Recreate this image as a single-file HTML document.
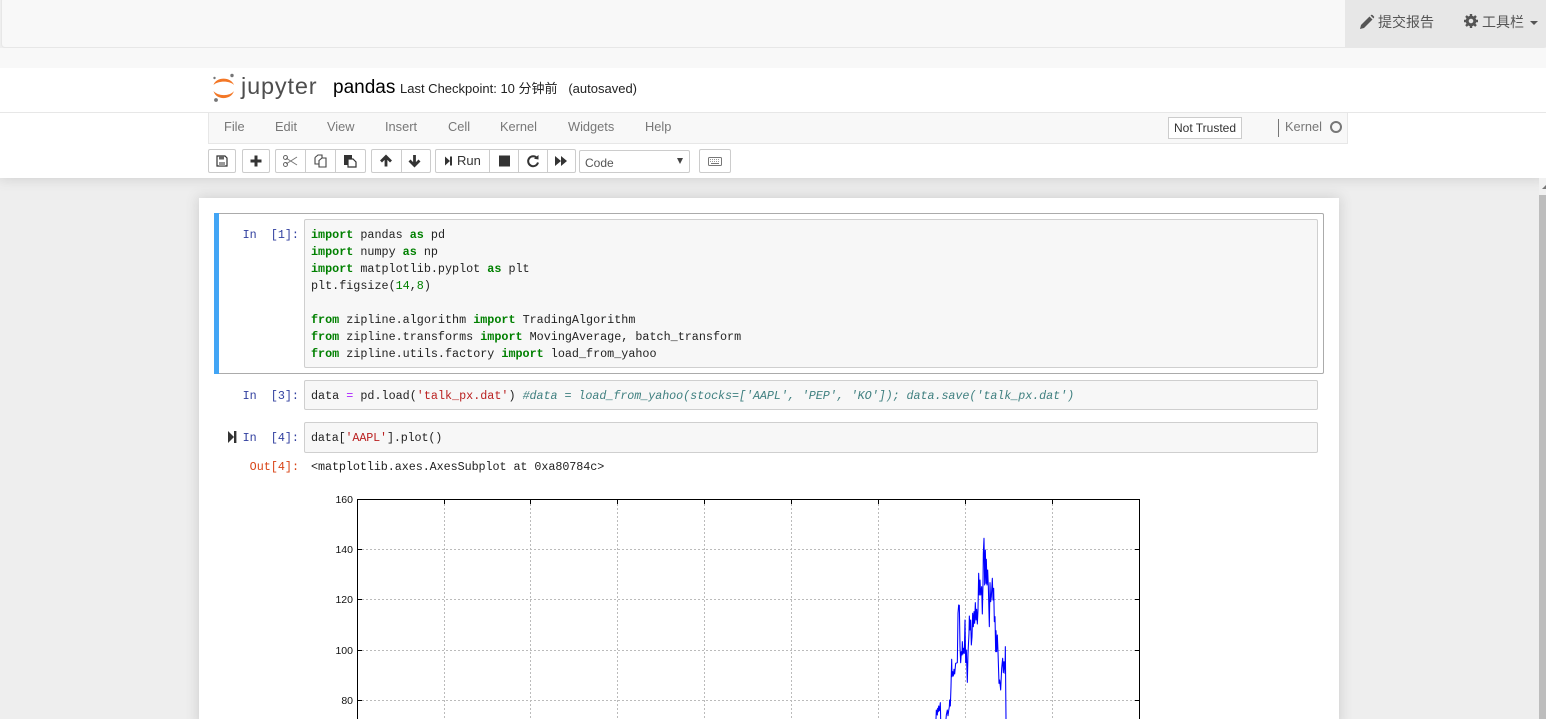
<!DOCTYPE html>
<html><head><meta charset="utf-8"><title>pandas</title>
<style>
html,body{margin:0;padding:0;width:1546px;height:719px;overflow:hidden;background:#eee;font-family:"Liberation Sans","Noto Sans CJK SC",sans-serif;}
#w{position:relative;width:1546px;height:719px;overflow:hidden;background:#eee;}
.a{position:absolute;box-sizing:border-box;}
.t{position:absolute;white-space:pre;line-height:18px;}
.m{color:#777;font-size:12.8px;top:118px;}
.b{position:absolute;box-sizing:border-box;top:149px;height:24px;background:#fff;border:1px solid #ccc;}
.b svg{position:absolute;left:0;top:0;}
.code{position:absolute;left:311px;margin:0;font:11.75px/17px "Liberation Mono",monospace;color:#222;white-space:pre;}
.p{position:absolute;left:204px;width:95px;text-align:right;font:11.75px/17px "Liberation Mono",monospace;color:#303F9F;white-space:pre;}
.input{position:absolute;box-sizing:border-box;left:304px;width:1014px;background:#f7f7f7;border:1px solid #cfcfcf;border-radius:2px;}
b{color:#008000;}
.s{color:#BA2121;}.n{color:#008000;}.o{color:#AA22FF;}.c{color:#408080;font-style:italic;letter-spacing:-.07px;}
.y{position:absolute;font:10.5px/12px "Liberation Sans",sans-serif;color:#111;left:323px;width:30px;text-align:right;}
</style></head><body><div id="w">
<!-- header -->
<div class="a" style="left:0;top:68px;width:1546px;height:110px;background:#fff;box-shadow:0 0 12px 1px rgba(87,87,87,.2);"></div>
<!-- top nav -->
<div class="a" style="left:0;top:48px;width:1546px;height:20px;background:#f8f8f8;"></div>
<div class="a" style="left:1px;top:-3px;width:1546px;height:51px;background:#f8f8f8;border:1px solid #e7e7e7;border-radius:4px;"></div>
<div class="a" style="left:1345px;top:0;width:201px;height:47px;background:#e7e7e7;"></div>
<svg class="a" style="left:1359px;top:14px" width="16" height="16" viewBox="0 0 16 16"><path d="M1 15 L2 11 L10.5 2.5 L13.5 5.5 L5 14 Z M11.5 1.5 L12.5 .8 Q13 .5 13.5 1 L15 2.5 Q15.5 3 15 3.6 L14.5 4.5 Z" fill="#555"/></svg>
<div class="t" style="left:1378px;top:13px;font-size:14px;color:#555;">提交报告</div>
<svg class="a" style="left:1464px;top:14px" width="14" height="14" viewBox="0 0 14 14"><circle cx="7" cy="7" r="3.8" fill="none" stroke="#555" stroke-width="3"/><g stroke="#555" stroke-width="2.4"><path d="M7 0V3M7 11V14M0 7H3M11 7H14M2 2L4 4M10 10L12 12M12 2L10 4M4 10L2 12"/></g></svg>
<div class="t" style="left:1482px;top:13px;font-size:14px;color:#555;">工具栏</div>
<div class="a" style="left:1530px;top:21px;width:0;height:0;border:4px solid transparent;border-top-color:#555;border-bottom:0;"></div>

<div class="a" style="left:0;top:112px;width:1546px;height:1px;background:#e7e7e7;"></div>
<svg class="a" style="left:205px;top:68px" width="40" height="40" viewBox="205 68 40 40">
<path d="M213.5 85 C216 76.5 231 76.5 234 85 C230 80.5 218 80.5 213.5 85Z" fill="#F37726"/>
<path d="M213.5 91 C216 100.5 231 100.5 234 91 C230 96.5 218 96.5 213.5 91Z" fill="#F37726"/>
<circle cx="214.5" cy="78" r="1.2" fill="#767677"/><circle cx="232" cy="75.5" r="1.7" fill="#767677"/><circle cx="216" cy="100" r="1.9" fill="#767677"/>
</svg>
<div class="t" style="left:241px;top:74px;font-size:23.5px;line-height:24px;color:#4e4e4e;letter-spacing:.85px;">jupyter</div>
<div class="t" style="left:333px;top:79px;font-size:19px;color:#000;">pandas</div>
<div class="t" style="left:400px;top:80px;font-size:13px;color:#222;">Last Checkpoint: 10 分钟前 &nbsp; (autosaved)</div>

<!-- menu -->
<div class="a" style="left:208px;top:113px;width:1140px;height:31px;background:#f8f8f8;border:1px solid #e7e7e7;border-top:0;"></div>
<div class="t m" style="left:224px">File</div><div class="t m" style="left:275px">Edit</div><div class="t m" style="left:327px">View</div><div class="t m" style="left:385px">Insert</div><div class="t m" style="left:448px">Cell</div><div class="t m" style="left:500px">Kernel</div><div class="t m" style="left:568px">Widgets</div><div class="t m" style="left:645px">Help</div>
<div class="a" style="left:1168px;top:117px;width:74px;height:22px;background:#fff;border:1px solid #ccc;"></div>
<div class="t" style="left:1174px;top:118.5px;font-size:12px;color:#333;">Not Trusted</div>
<div class="a" style="left:1278px;top:119px;width:1px;height:18px;background:#777;"></div>
<div class="t m" style="left:1285px;">Kernel</div>
<div class="a" style="left:1330px;top:121px;width:12px;height:12px;border:2px solid #777;border-radius:50%;"></div>

<!-- toolbar -->
<div class="b" style="left:208px;width:28px;border-radius:2px"><svg width="26" height="22" viewBox="0 0 26 22"><path d="M8 6H16L18 8V16H8Z" fill="none" stroke="#333" stroke-width="1.2"/><rect x="10" y="6" width="5" height="3.5" fill="#666"/><rect x="10" y="12" width="6" height="4" fill="#999"/></svg></div>
<div class="b" style="left:242px;width:28px;border-radius:2px"><svg width="26" height="22" viewBox="0 0 26 22"><path d="M13 5.5V16.5M7.5 11H18.5" stroke="#333" stroke-width="3"/></svg></div>
<div class="b" style="left:275px;width:31px;border-radius:2px 0 0 2px"><svg width="29" height="22" viewBox="0 0 29 22"><path d="M10 8L21 15M10 14L21 7" stroke="#777" stroke-width="1"/><circle cx="9.5" cy="7.5" r="2" fill="none" stroke="#666"/><circle cx="9.5" cy="14.5" r="2" fill="none" stroke="#666"/></svg></div>
<div class="b" style="left:305px;width:31px"><svg width="29" height="22" viewBox="0 0 29 22"><path d="M9 7.5L12 5H16V8M9 7.5V14H13M13 10.5L16 8H20V17H13Z" fill="#fff" stroke="#444" stroke-width="1.1"/></svg></div>
<div class="b" style="left:335px;width:31px;border-radius:0 2px 2px 0"><svg width="29" height="22" viewBox="0 0 29 22"><rect x="8" y="5" width="8" height="10" fill="#333"/><path d="M12 9H17L20 12V17H12Z" fill="#fff" stroke="#333" stroke-width="1.2"/></svg></div>
<div class="b" style="left:371px;width:31px;border-radius:2px 0 0 2px"><svg width="29" height="22" viewBox="0 0 29 22"><path d="M14 16.5V7M9 11.5L14 6.5L19 11.5" fill="none" stroke="#333" stroke-width="2.8"/></svg></div>
<div class="b" style="left:401px;width:30px;border-radius:0 2px 2px 0"><svg width="28" height="22" viewBox="0 0 28 22"><path d="M12.500 5V15M7.500 10.500L12.500 15.500L17.500 10.500" fill="none" stroke="#333" stroke-width="2.8"/></svg></div>
<div class="b" style="left:435px;width:55px;border-radius:2px 0 0 2px"><svg width="20" height="22" viewBox="0 0 20 22"><path d="M9 6.5L14 11L9 15.5Z M14 6.5H16V15.5H14Z" fill="#333"/></svg><div class="t" style="left:21px;top:2px;font-size:13px;color:#333;">Run</div></div>
<div class="b" style="left:489px;width:30px"><svg width="28" height="22" viewBox="0 0 28 22"><rect x="9" y="5.500" width="11" height="11" fill="#333"/></svg></div>
<div class="b" style="left:518px;width:30px"><svg width="28" height="22" viewBox="0 0 28 22"><path d="M18 8A5 5 0 1 0 19 12.500" fill="none" stroke="#333" stroke-width="2"/><path d="M15 8.800L19.500 9.500V5Z" fill="#333"/></svg></div>
<div class="b" style="left:547px;width:29px;border-radius:0 2px 2px 0"><svg width="27" height="22" viewBox="0 0 27 22"><path d="M7 6L13 11L7 16Z M13 6L19 11L13 16Z" fill="#333"/></svg></div>
<div class="b" style="left:579px;top:150px;width:111px;height:23px;border-radius:2px"><div class="t" style="left:5px;top:3px;font-size:12px;color:#555;">Code</div><div class="a" style="left:97px;top:7px;width:0;height:0;border:3.500px solid transparent;border-top:6px solid #444;border-bottom:0;"></div></div>
<div class="b" style="left:699px;width:32px;border-radius:2px"><svg width="30" height="22" viewBox="0 0 30 22"><rect x="8.500" y="7.500" width="13" height="8" rx="1" fill="none" stroke="#777"/><path d="M10 9.500H20M10 11.500H20" stroke="#999" stroke-dasharray="1 1"/><path d="M11 13.500H19" stroke="#777"/></svg></div>

<!-- scrollbar -->
<div class="a" style="left:1539px;top:178px;width:7px;height:541px;background:#f1f1f1;"></div>
<div class="a" style="left:1539px;top:195px;width:7px;height:524px;background:#bdbdbd;"></div>
<div class="a" style="left:1542px;top:185px;width:0;height:0;border-left:4px solid transparent;border-bottom:4px solid #777;"></div>

<!-- notebook -->
<div class="a" style="left:199px;top:198px;width:1140px;height:530px;background:#fff;box-shadow:0 0 12px 1px rgba(87,87,87,.2);"></div>
<div class="a" style="left:214px;top:213px;width:1110px;height:161px;border:1px solid #ababab;border-left:0;border-radius:2px;"></div>
<div class="a" style="left:214px;top:213px;width:5px;height:161px;background:#42A5F5;"></div>

<div class="input" style="top:219px;height:149px;"></div>
<div class="p" style="top:227px">In  [1]:</div>
<pre class="code" style="top:227px"><b>import</b> pandas <b>as</b> pd
<b>import</b> numpy <b>as</b> np
<b>import</b> matplotlib.pyplot <b>as</b> plt
plt.figsize(<span class="n">14</span>,<span class="n">8</span>)

<b>from</b> zipline.algorithm <b>import</b> TradingAlgorithm
<b>from</b> zipline.transforms <b>import</b> MovingAverage, batch_transform
<b>from</b> zipline.utils.factory <b>import</b> load_from_yahoo</pre>

<div class="input" style="top:380px;height:30px;"></div>
<div class="p" style="top:388px">In  [3]:</div>
<pre class="code" style="top:388px">data <span class="o">=</span> pd.load(<span class="s">'talk_px.dat'</span>) <span class="c">#data = load_from_yahoo(stocks=['AAPL', 'PEP', 'KO']); data.save('talk_px.dat')</span></pre>

<svg class="a" style="left:226px;top:430px" width="12" height="14" viewBox="0 0 12 14"><path d="M2 1L8 7L2 13Z" fill="#333"/><rect x="8" y="1" width="2.400" height="12" fill="#333"/></svg>
<div class="input" style="top:422px;height:31px;"></div>
<div class="p" style="top:430px">In  [4]:</div>
<pre class="code" style="top:430px;letter-spacing:-.15px">data[<span class="s">'AAPL'</span>].plot()</pre>
<div class="p" style="top:459px;color:#D84315">Out[4]:</div>
<pre class="code" style="top:459px;letter-spacing:-.07px">&lt;matplotlib.axes.AxesSubplot at 0xa80784c&gt;</pre>

<!-- plot -->
<svg class="a" style="left:340px;top:480px" width="820" height="239" viewBox="340 480 820 239">
<g stroke="#bbbbbb" stroke-width="1" stroke-dasharray="2 2" fill="none" shape-rendering="crispEdges">
<path d="M444.500 500V719M530.500 500V719M617.500 500V719M704.500 500V719M791.500 500V719M878.500 500V719M965.500 500V719M1052.500 500V719"/>
<path d="M358 549.500H1139M358 599.500H1139M358 650.500H1139M358 700.500H1139"/>
</g>
<g stroke="#000" stroke-width="1" shape-rendering="crispEdges">
<path d="M357.500 719V499.500H1139.500V719" fill="none"/>
<path d="M358 549.500H362M358 599.500H362M358 650.500H362M358 700.500H362M1139 549.500H1135M1139 599.500H1135M1139 650.500H1135M1139 700.500H1135"/>
<path d="M444.500 500V504M530.500 500V504M617.500 500V504M704.500 500V504M791.500 500V504M878.500 500V504M965.500 500V504M1052.500 500V504"/>
</g>
</svg>
<svg class="a" style="left:900px;top:520px" width="150" height="199" viewBox="0 0 450 597">
<path fill="none" stroke="#0000ff" stroke-width="3.200" stroke-linejoin="round" d="M108 597L109 570L112 585L113 565L115 575L116 558L118 572L121 548L122 597M138 597L139 585L142 570L144 587L146 572L148 560L149 540L151 558L153 500L155 418L156 470L158 455L160 468L162 448L164 462L167 430L172 428L174 280L176 255L178 256L180 380L182 428L184 395L186 405L187 365L189 402L191 385L193 400L195 300L197 428L199 390L202 487L204 400L207 340L208 288L210 330L212 300L214 375L216 350L218 280L220 320L222 275L224 310L226 248L228 300L230 268L232 312L234 270L236 160L238 225L240 180L242 225L245 200L247 282L249 190L250 100L252 55L254 195L256 90L258 190L259 118L261 195L263 150L265 200L268 320L270 188L272 245L274 230L277 175L279 240L281 205L283 305L285 290L287 395L288 332L290 395L292 345L294 395L297 490L299 480L302 510L305 445L308 415L310 458L312 425L315 460L316 380L318 597"/>
</svg>
<div class="y" style="top:494px">160</div>
<div class="y" style="top:544px">140</div>
<div class="y" style="top:594px">120</div>
<div class="y" style="top:645px">100</div>
<div class="y" style="top:695px">80</div>
</div></body></html>
